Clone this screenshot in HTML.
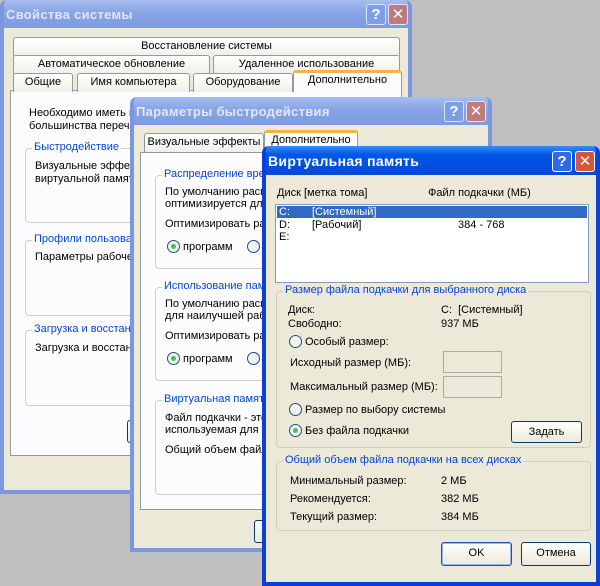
<!DOCTYPE html>
<html><head><meta charset="utf-8"><style>
*{margin:0;padding:0;box-sizing:border-box}
body{width:600px;height:577px;background:#c0c0c0;position:relative;overflow:hidden;font-family:"Liberation Sans","DejaVu Sans",sans-serif;font-size:11px;color:#000}
.a{position:absolute;white-space:nowrap}
.win{position:absolute;overflow:hidden}
.inact{background:#ece9d8;border:4px solid #7b97e0;border-top:none;border-radius:7px 7px 0 0}
.inact .tb{position:absolute;left:-4px;right:-4px;top:0;height:28px;background:linear-gradient(#a6bdf0,#8aa6e6 40%,#7d9ae2);border-radius:7px 7px 0 0}
.act{background:#ece9d8;border:4px solid #0a3fd8;border-top:none;border-radius:7px 7px 0 0}
.act .tb{position:absolute;left:-4px;right:-4px;top:0;height:29px;background:linear-gradient(#3d8bf5,#0058e6 30%,#0150e0 70%,#0a49d0);border-radius:7px 7px 0 0}
.tt{position:absolute;top:7px;left:6px;font-weight:bold;font-size:13px;color:#fff;letter-spacing:0.3px}
.inact .tt{color:#dfe8fb}
.btn{position:absolute;width:20px;height:21px;border:1px solid #fff;border-radius:3px;color:#fff;font-weight:bold;font-size:15px;text-align:center;line-height:19px}
.q{background:#2c6ae8}.x{background:#d8553a}
.inact .q{background:#7d9de6;border-color:#dbe5fa}.inact .x{background:#c07a7e;border-color:#dbe5fa}
.tab{position:absolute;height:19px;border:1px solid #919b9c;border-bottom:none;border-radius:3px 3px 0 0;background:linear-gradient(#fff,#f0f0ea);text-align:center;line-height:17px}
.tab.on{border-top:3px solid #f6b24a;background:#fcfcfe;line-height:14px}
.panel{position:absolute;border:1px solid #919b9c;background:#fcfcfe}
.grp{position:absolute;border:1px solid #d0d0bf;border-radius:4px}
.gt{position:absolute;color:#0046d5;background:#fcfcfe;padding:0 2px;top:-8px;left:6px;white-space:nowrap}
.act .gt{background:#ece9d8}
.rad{position:absolute;width:13px;height:13px;border:1px solid #1c5180;border-radius:50%;background:#f2f2ee}
.rad.on::after{content:"";position:absolute;left:3px;top:3px;width:5px;height:5px;border-radius:50%;background:#4dc050}
.pb{position:absolute;border:1px solid #003c74;border-radius:3px;background:linear-gradient(#fff,#ece9d8);text-align:center;line-height:21px}
</style></head><body>

<!-- Window 1 -->
<div class="win inact" style="left:0;top:0;width:412px;height:494px">
 <div class="tb"><div class="tt">Свойства системы</div>
  <div class="btn q" style="left:366px;top:4px">?</div><div class="btn x" style="left:388px;top:4px">✕</div></div>
 <div class="tab" style="left:9px;top:37px;width:387px">Восстановление системы</div>
 <div class="tab" style="left:9px;top:55px;width:197px">Автоматическое обновление</div>
 <div class="tab" style="left:209px;top:55px;width:187px">Удаленное использование</div>
 <div class="panel" style="left:6px;top:90px;width:392px;height:366px"></div>
 <div class="tab" style="left:9px;top:73px;width:60px">Общие</div>
 <div class="tab" style="left:73px;top:73px;width:113px">Имя компьютера</div>
 <div class="tab" style="left:189px;top:73px;width:100px">Оборудование</div>
 <div class="tab on" style="left:289px;top:70px;width:109px;height:22px">Дополнительно</div>
 <div class="a" style="left:25px;top:107px">Необходимо иметь права администратора</div>
 <div class="a" style="left:25px;top:120px">большинства перечисленных параметров</div>
 <div class="grp" style="left:21px;top:148px;width:370px;height:75px"><div class="gt">Быстродействие</div></div>
 <div class="a" style="left:31px;top:160px">Визуальные эффекты, использование процессора</div>
 <div class="a" style="left:31px;top:173px">виртуальной памяти</div>
 <div class="grp" style="left:21px;top:240px;width:370px;height:76px"><div class="gt">Профили пользователей</div></div>
 <div class="a" style="left:31px;top:251px">Параметры рабочего стола</div>
 <div class="grp" style="left:21px;top:330px;width:370px;height:76px"><div class="gt">Загрузка и восстановление</div></div>
 <div class="a" style="left:31px;top:342px">Загрузка и восстановление системы</div>
 <div class="pb" style="left:123px;top:420px;width:75px;height:23px"></div>
</div>

<!-- Window 2 -->
<div class="win inact" style="left:130px;top:97px;width:362px;height:455px">
 <div class="tb"><div class="tt">Параметры быстродействия</div>
  <div class="btn q" style="left:314px;top:4px">?</div><div class="btn x" style="left:336px;top:4px">✕</div></div>
 <div class="panel" style="left:6px;top:55px;width:346px;height:358px"></div>
 <div class="tab" style="left:10px;top:36px;width:120px">Визуальные эффекты</div>
 <div class="tab on" style="left:130px;top:33px;width:94px;height:23px">Дополнительно</div>
 <div class="grp" style="left:21px;top:78px;width:320px;height:94px"><div class="gt">Распределение времени процессора</div></div>
 <div class="a" style="left:31px;top:89px">По умолчанию распределение времени</div>
 <div class="a" style="left:31px;top:101px">оптимизируется для программ</div>
 <div class="a" style="left:31px;top:121px">Оптимизировать работу</div>
 <div class="rad on" style="left:33px;top:143px"></div><div class="a" style="left:49px;top:144px">программ</div>
 <div class="rad" style="left:113px;top:143px"></div><div class="a" style="left:129px;top:144px">служб</div>
 <div class="grp" style="left:21px;top:190px;width:320px;height:94px"><div class="gt">Использование памяти</div></div>
 <div class="a" style="left:31px;top:201px">По умолчанию распределение памяти</div>
 <div class="a" style="left:31px;top:213px">для наилучшей работы программ</div>
 <div class="a" style="left:31px;top:233px">Оптимизировать работу</div>
 <div class="rad on" style="left:33px;top:255px"></div><div class="a" style="left:49px;top:256px">программ</div>
 <div class="rad" style="left:113px;top:255px"></div><div class="a" style="left:129px;top:256px">кэша</div>
 <div class="grp" style="left:21px;top:303px;width:320px;height:95px"><div class="gt">Виртуальная память</div></div>
 <div class="a" style="left:31px;top:315px">Файл подкачки - это область на диске,</div>
 <div class="a" style="left:31px;top:327px">используемая для хранения</div>
 <div class="a" style="left:31px;top:347px">Общий объем файла подкачки</div>
 <div class="pb" style="left:120px;top:423px;width:75px;height:23px"></div>
</div>

<!-- Window 3 -->
<div class="win act" style="left:262px;top:146px;width:338px;height:440px">
 <div class="tb"><div class="tt" style="font-size:14px">Виртуальная память</div>
  <div class="btn q" style="left:290px;top:5px">?</div><div class="btn x" style="left:313px;top:5px">✕</div></div>
 <div class="a" style="left:11px;top:41px">Диск [метка тома]</div>
 <div class="a" style="left:162px;top:41px">Файл подкачки (МБ)</div>
 <div style="position:absolute;left:9px;top:58px;width:314px;height:79px;border:1px solid #7f9db9;background:#fff"></div>
 <div style="position:absolute;left:11px;top:60px;width:310px;height:12px;background:#316ac5"></div>
 <div class="a" style="left:13px;top:60px;color:#fff;line-height:12px">C:</div>
 <div class="a" style="left:46px;top:60px;color:#fff;line-height:12px">[Системный]</div>
 <div class="a" style="left:13px;top:73px">D:</div><div class="a" style="left:46px;top:73px">[Рабочий]</div><div class="a" style="left:192px;top:73px">384 - 768</div>
 <div class="a" style="left:13px;top:85px">E:</div>
 <div class="grp" style="left:10px;top:145px;width:315px;height:157px"><div class="gt">Размер файла подкачки для выбранного диска</div></div>
 <div class="a" style="left:22px;top:158px">Диск:</div><div class="a" style="left:175px;top:158px">C:&nbsp; [Системный]</div>
 <div class="a" style="left:22px;top:172px">Свободно:</div><div class="a" style="left:175px;top:172px">937 МБ</div>
 <div class="rad" style="left:23px;top:189px"></div><div class="a" style="left:39px;top:190px">Особый размер:</div>
 <div class="a" style="left:24px;top:211px">Исходный размер (МБ):</div>
 <div style="position:absolute;left:177px;top:205px;width:59px;height:22px;border:1px solid #aaa"></div>
 <div class="a" style="left:24px;top:235px">Максимальный размер (МБ):</div>
 <div style="position:absolute;left:177px;top:230px;width:59px;height:22px;border:1px solid #aaa"></div>
 <div class="rad" style="left:23px;top:257px"></div><div class="a" style="left:39px;top:258px">Размер по выбору системы</div>
 <div class="rad on" style="left:23px;top:278px"></div><div class="a" style="left:39px;top:279px">Без файла подкачки</div>
 <div class="pb" style="left:245px;top:275px;width:71px;height:22px">Задать</div>
 <div class="grp" style="left:10px;top:315px;width:315px;height:70px"><div class="gt">Общий объем файла подкачки на всех дисках</div></div>
 <div class="a" style="left:24px;top:329px">Минимальный размер:</div><div class="a" style="left:175px;top:329px">2 МБ</div>
 <div class="a" style="left:24px;top:347px">Рекомендуется:</div><div class="a" style="left:175px;top:347px">382 МБ</div>
 <div class="a" style="left:24px;top:365px">Текущий размер:</div><div class="a" style="left:175px;top:365px">384 МБ</div>
 <div class="pb" style="left:175px;top:396px;width:71px;height:24px;border-color:#2050b0;box-shadow:inset 0 0 0 1px #9ab8f0">OK</div>
 <div class="pb" style="left:255px;top:396px;width:70px;height:24px">Отмена</div>
</div>
</body></html>
